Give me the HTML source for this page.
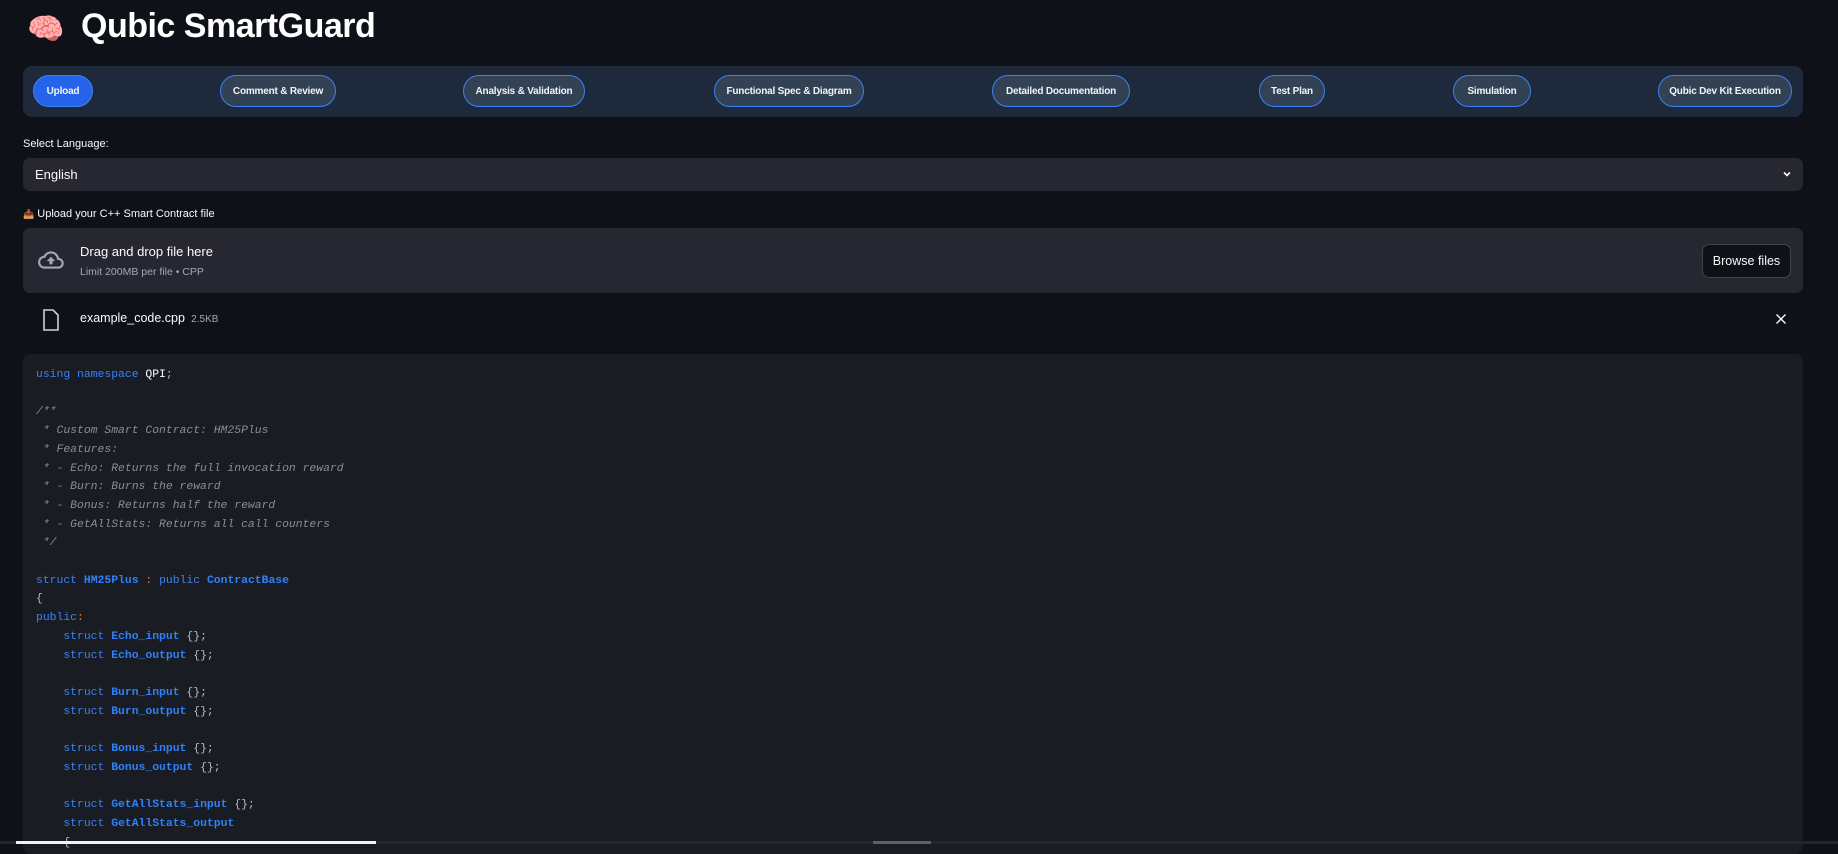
<!DOCTYPE html>
<html><head><meta charset="utf-8"><style>
*{margin:0;padding:0;box-sizing:border-box}
body{width:1838px;height:844px;overflow:hidden;background:#0e1117;font-family:"Liberation Sans",sans-serif;color:#fafafa;position:relative}
.abs{position:absolute}
h1{position:absolute;left:81px;top:7px;font-size:34px;font-weight:bold;letter-spacing:-0.5px;color:#fff}
.nav{left:23px;top:66px;width:1780px;height:51px;background:#1e293b;border-radius:9px}
.pill{position:absolute;top:9px;height:32px;border:1px solid #3b82f6;background:#334155;border-radius:16px;font-size:10px;letter-spacing:-0.2px;font-weight:bold;color:#f1f5f9;display:flex;align-items:center;justify-content:center;white-space:nowrap}
.lbl{font-size:11px;color:#fafafa}
.box{background:#262730;border-radius:7px}
pre{position:absolute;left:36px;top:366px;font-family:"Liberation Mono",monospace;font-size:11.4px;line-height:18.7px;color:#b8bcc8}
.k{color:#3b82f6}.t{color:#2f81f7;font-weight:bold}.c{color:#8a8d99;font-style:italic}.o{color:#f97316}.w{color:#fff}
</style></head><body>
<div class="abs" style="left:27px;top:12px;font-size:30px;line-height:36px">🧠</div>
<h1>Qubic SmartGuard</h1>
<div class="abs nav">
<div class="pill" style="left:10px;width:60px;background:#2563eb;border-color:#3b82f6">Upload</div>
<div class="pill" style="left:197px;width:116px">Comment &amp; Review</div>
<div class="pill" style="left:440px;width:122px">Analysis &amp; Validation</div>
<div class="pill" style="left:691px;width:150px">Functional Spec &amp; Diagram</div>
<div class="pill" style="left:969px;width:138px">Detailed Documentation</div>
<div class="pill" style="left:1236px;width:66px">Test Plan</div>
<div class="pill" style="left:1430px;width:78px">Simulation</div>
<div class="pill" style="left:1635px;width:134px">Qubic Dev Kit Execution</div>
</div>
<div class="abs lbl" style="left:23px;top:138px">Select Language:</div>
<div class="abs box" style="left:23px;top:158px;width:1780px;height:33px"></div>
<div class="abs" style="left:35px;top:167px;font-size:13px">English</div>
<svg class="abs" style="left:1781px;top:168px" width="12" height="12" viewBox="0 0 12 12"><path d="M3 4.5L6 7.5L9 4.5" stroke="#fafafa" stroke-width="1.6" fill="none"/></svg>
<div class="abs lbl" style="left:23px;top:208px"><span style="font-size:9px">📥</span> Upload your C++ Smart Contract file</div>
<div class="abs box" style="left:23px;top:228px;width:1780px;height:65px"></div>
<svg class="abs" style="left:36px;top:247px" width="30" height="26" viewBox="0 0 24 24"><path d="M19.35 10.04A7.49 7.49 0 0012 4C9.11 4 6.6 5.64 5.35 8.04A6 6 0 006 20h13a5 5 0 00.35-9.96zM19 18H6a4 4 0 01-.43-7.98l1.07-.11.5-.95A5.47 5.47 0 0112 6c2.62 0 4.88 1.86 5.39 4.43l.3 1.5 1.53.11A3 3 0 0119 18zM8 13h2.55v3h2.9v-3H16l-4-4z" fill="#a3a8b8"/></svg>
<div class="abs" style="left:80px;top:244px;font-size:13px">Drag and drop file here</div>
<div class="abs" style="left:80px;top:266px;font-size:10.5px;color:#a3a8b8">Limit 200MB per file • CPP</div>
<div class="abs" style="left:1702px;top:244px;width:89px;height:34px;border:1px solid #41444e;border-radius:7px;background:#0e1117;font-size:12.5px;display:flex;align-items:center;justify-content:center">Browse files</div>
<svg class="abs" style="left:42px;top:309px" width="18" height="22" viewBox="0 0 18 22"><path d="M2 1h9l5 5v15H2z" stroke="#d0d3da" stroke-width="1.6" fill="none"/></svg>
<div class="abs" style="left:80px;top:311px;font-size:12.5px">example_code.cpp <span style="font-size:10px;color:#a3a8b8">&nbsp;2.5KB</span></div>
<svg class="abs" style="left:1775px;top:313px" width="12" height="12" viewBox="0 0 12 12"><path d="M1.5 1.5L10.5 10.5M10.5 1.5L1.5 10.5" stroke="#fafafa" stroke-width="1.4"/></svg>
<div class="abs" style="left:23px;top:354px;width:1780px;height:500px;background:#1a1c24;border-radius:7px"></div>
<pre><span class="k">using namespace</span> <span class="w">QPI</span>;

<span class="c">/**
 * Custom Smart Contract: HM25Plus
 * Features:
 * - Echo: Returns the full invocation reward
 * - Burn: Burns the reward
 * - Bonus: Returns half the reward
 * - GetAllStats: Returns all call counters
 */</span>

<span class="k">struct</span> <span class="t">HM25Plus</span> <span class="o">:</span> <span class="k">public</span> <span class="t">ContractBase</span>
{
<span class="k">public</span><span class="o">:</span>
    <span class="k">struct</span> <span class="t">Echo_input</span> {};
    <span class="k">struct</span> <span class="t">Echo_output</span> {};

    <span class="k">struct</span> <span class="t">Burn_input</span> {};
    <span class="k">struct</span> <span class="t">Burn_output</span> {};

    <span class="k">struct</span> <span class="t">Bonus_input</span> {};
    <span class="k">struct</span> <span class="t">Bonus_output</span> {};

    <span class="k">struct</span> <span class="t">GetAllStats_input</span> {};
    <span class="k">struct</span> <span class="t">GetAllStats_output</span>
    {</pre>
<div class="abs" style="left:0;top:841px;width:1838px;height:3px;background:#1c2a30"></div>
<div class="abs" style="left:16px;top:841px;width:360px;height:3px;background:#f2f2f2"></div>
<div class="abs" style="left:873px;top:841px;width:58px;height:3px;background:#5a6066"></div>
</body></html>
